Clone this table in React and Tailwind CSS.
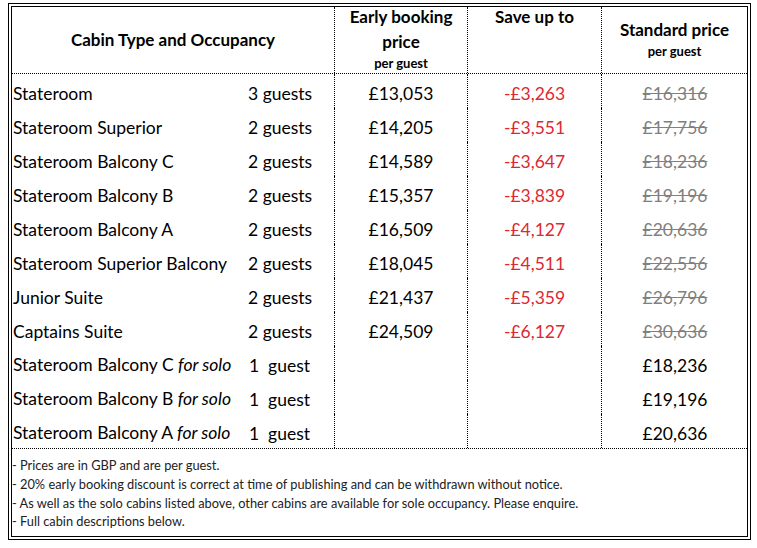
const rows = [
  { name: "Stateroom", guests: "3 guests", early: "£13,053", save: "-£3,263", std: "£16,316" },
  { name: "Stateroom Superior", guests: "2 guests", early: "£14,205", save: "-£3,551", std: "£17,756" },
  { name: "Stateroom Balcony C", guests: "2 guests", early: "£14,589", save: "-£3,647", std: "£18,236" },
  { name: "Stateroom Balcony B", guests: "2 guests", early: "£15,357", save: "-£3,839", std: "£19,196" },
  { name: "Stateroom Balcony A", guests: "2 guests", early: "£16,509", save: "-£4,127", std: "£20,636" },
  { name: "Stateroom Superior Balcony", guests: "2 guests", early: "£18,045", save: "-£4,511", std: "£22,556" },
  { name: "Junior Suite", guests: "2 guests", early: "£21,437", save: "-£5,359", std: "£26,796" },
  { name: "Captains Suite", guests: "2 guests", early: "£24,509", save: "-£6,127", std: "£30,636" },
];

const solo = [
  { name: "Stateroom Balcony C", std: "£18,236" },
  { name: "Stateroom Balcony B", std: "£19,196" },
  { name: "Stateroom Balcony A", std: "£20,636" },
];

const notes = [
  "- Prices are in GBP and are per guest.",
  "- 20% early booking discount is correct at time of publishing and can be withdrawn without notice.",
  "- As well as the solo cabins listed above, other cabins are available for sole occupancy. Please enquire.",
  "- Full cabin descriptions below.",
];

const cols = "grid grid-cols-[323px_133px_134px_145px]";
const vline = "border-r border-dotted border-black";

const App = () => {
  return (
    <div className="min-h-[548px] bg-white pt-[3px] pl-[8px] font-['Lato','Liberation_Sans',sans-serif] text-black">
      <div className="w-[743px] border-4 border-double border-black">
        {/* header */}
        <div className={`${cols} h-[67px] border-b border-dotted border-black font-bold`}>
          <div className={`${vline} flex items-center justify-center text-[17px] pb-[1px]`}>
            Cabin Type and Occupancy
          </div>
          <div className={`${vline} flex flex-col items-center`}>
            <div className="mt-[-3px] text-[17px] leading-[25px] text-center">Early booking<br />price</div>
            <div className="mt-[1px] text-[13px] leading-[16px]">per guest</div>
          </div>
          <div className={`${vline} flex justify-center`}>
            <div className="mt-[-3px] text-[17px] leading-[25px]">Save up to</div>
          </div>
          <div className="flex flex-col items-center pt-[10px]">
            <div className="text-[17px] leading-[25px]">Standard price</div>
            <div className="mt-[1px] text-[13px] leading-[16px]">per guest</div>
          </div>
        </div>

        {/* body */}
        <div className="border-b border-dotted border-black text-[17.5px]">
          {rows.map((r) => (
            <div key={r.name} className={`${cols} h-[34px]`}>
              <div className={`${vline} flex items-center pt-[6px] pl-[1px]`}>
                <span className="w-[235px]">{r.name}</span>
                <span>{r.guests}</span>
              </div>
              <div className={`${vline} flex items-center justify-center pt-[6px]`}>{r.early}</div>
              <div className={`${vline} flex items-center justify-center pt-[6px] text-[#dc2832]`}>{r.save}</div>
              <div className="flex items-center justify-center pt-[6px] pl-[1px] text-[#808080] line-through">
                {r.std}
              </div>
            </div>
          ))}
          {solo.map((r) => (
            <div key={r.name + "solo"} className={`${cols} h-[34px]`}>
              <div className={`${vline} flex items-center pt-[4px] pl-[1px]`}>
                <span className="w-[236px]">
                  {r.name} <i>for solo</i>
                </span>
                <span className="pt-[3px]">1&nbsp; guest</span>
              </div>
              <div className={vline}></div>
              <div className={vline}></div>
              <div className="flex items-center justify-center pt-[6px] pl-[1px]">{r.std}</div>
            </div>
          ))}
        </div>

        {/* notes */}
        <div className="h-[87px] pt-[7px] text-[12.8px] leading-[18.8px] text-[#222]">
          {notes.map((n) => (
            <div key={n}>{n}</div>
          ))}
        </div>
      </div>
    </div>
  );
};

export default App;
